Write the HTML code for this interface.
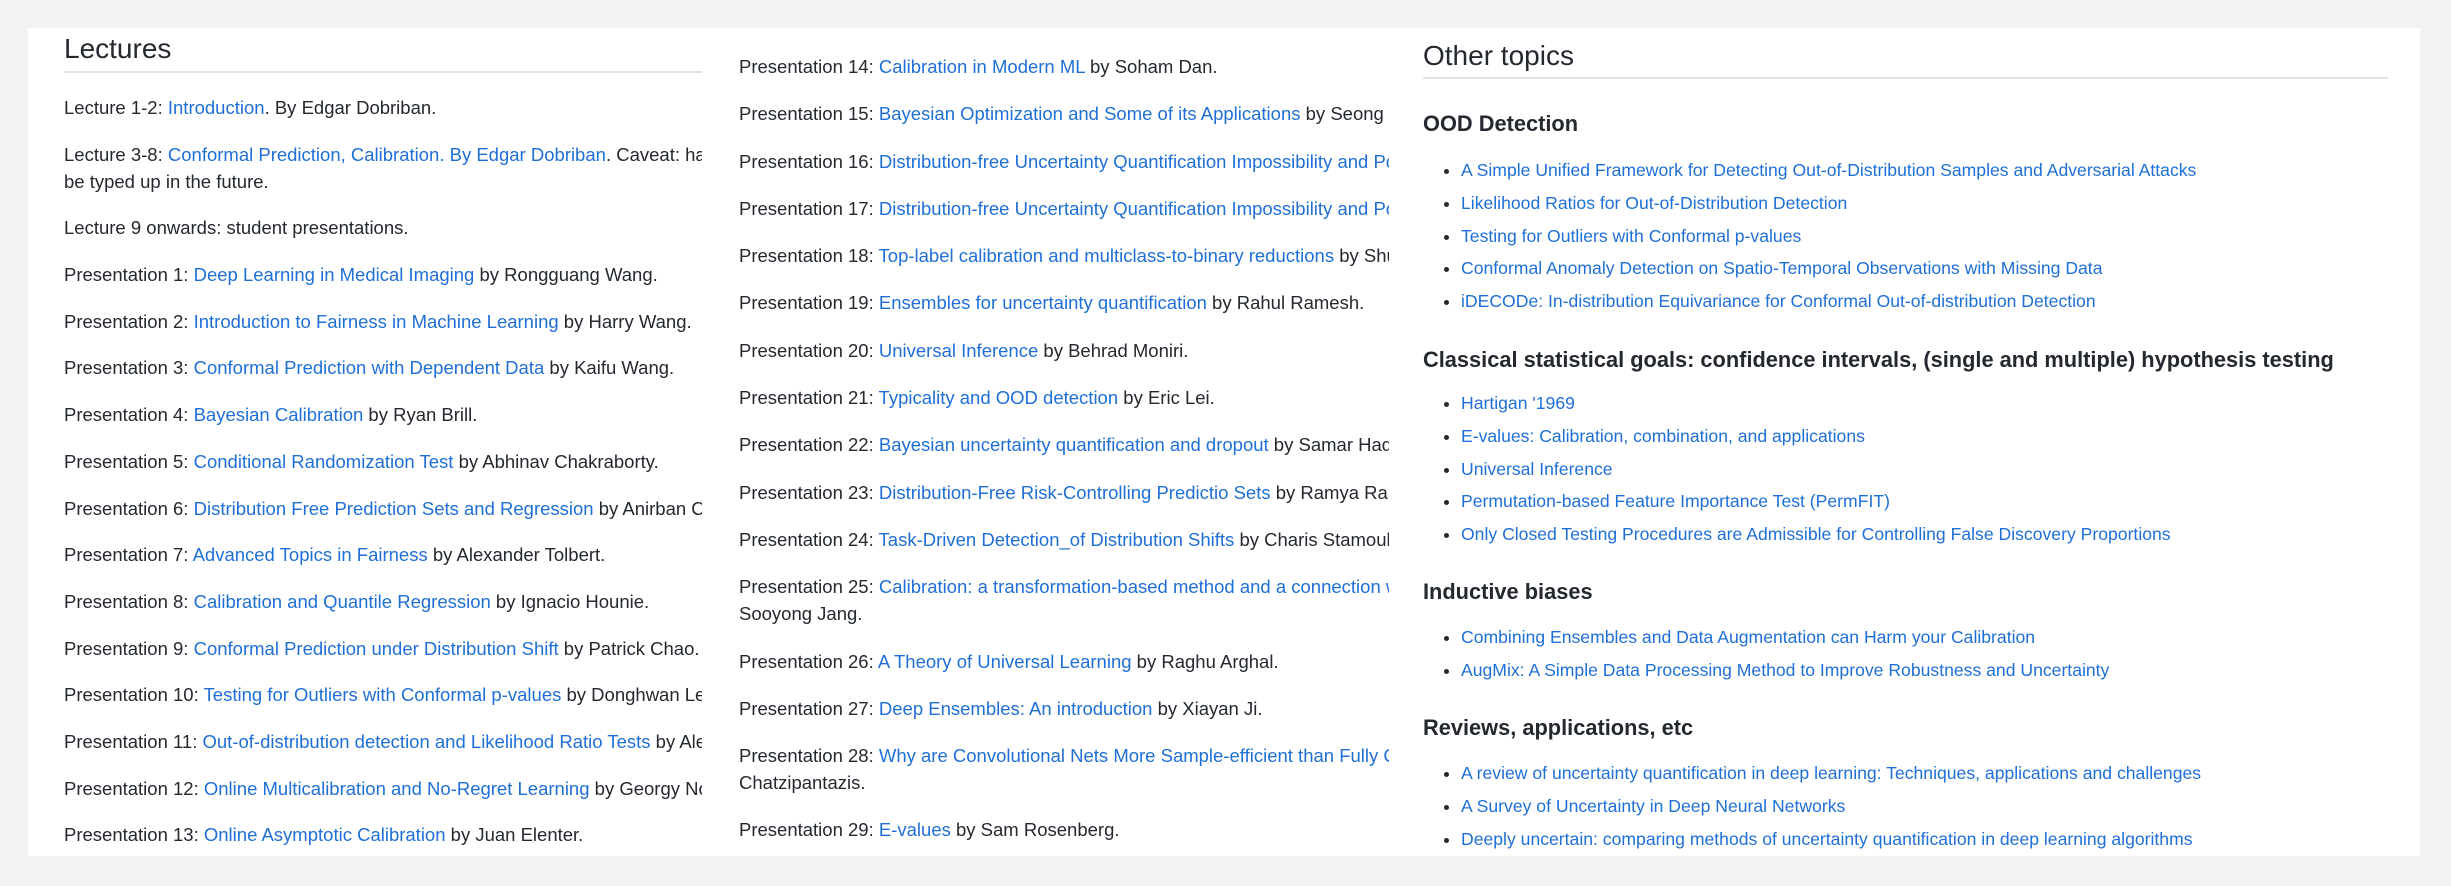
<!DOCTYPE html>
<html><head><meta charset="utf-8"><style>
*{margin:0;padding:0;box-sizing:border-box}
body{width:2451px;height:886px;background:#f2f2f2;font-family:"Liberation Sans",sans-serif;color:#24292f;overflow:hidden;position:relative}
.panel{position:absolute;left:28px;top:28px;width:2392px;height:828px;background:#fff}
.col{position:absolute;overflow:hidden;white-space:nowrap}
a{color:#1f6fd6;text-decoration:none}
.c1 p,.c2 p{font-size:18.5px;line-height:27px;margin-bottom:19.7px}
.c2 p{margin-bottom:20.3px}
h2{font-size:28px;font-weight:normal;line-height:40px}
.hr{position:absolute;height:2px;background:#dfe3e8}
h3{font-size:21.8px;font-weight:bold;line-height:34px;position:absolute;left:0}
ul{position:absolute;left:26px;list-style:disc;font-size:17.6px}
li{line-height:32.8px;margin-left:12px}
li::marker{color:#24292f}
</style></head><body>
<div class="panel"></div>

<div class="col c1" style="left:64px;top:28px;width:638px;height:828px">
<h2 style="margin-top:1px">Lectures</h2>
<div class="hr" style="left:0;top:43px;width:638px"></div>
<div style="position:absolute;top:66px;left:0">
<p>Lecture 1-2: <a>Introduction</a>. By Edgar Dobriban.</p>
<p>Lecture 3-8: <a>Conformal Prediction, Calibration. By Edgar Dobriban</a>. Caveat: handwritten notes, will<br>be typed up in the future.</p>
<p>Lecture 9 onwards: student presentations.</p>
<p>Presentation 1: <a>Deep Learning in Medical Imaging</a> by Rongguang Wang.</p>
<p>Presentation 2: <a>Introduction to Fairness in Machine Learning</a> by Harry Wang.</p>
<p>Presentation 3: <a>Conformal Prediction with Dependent Data</a> by Kaifu Wang.</p>
<p>Presentation 4: <a>Bayesian Calibration</a> by Ryan Brill.</p>
<p>Presentation 5: <a>Conditional Randomization Test</a> by Abhinav Chakraborty.</p>
<p>Presentation 6: <a>Distribution Free Prediction Sets and Regression</a> by Anirban Chatterjee.</p>
<p>Presentation 7: <a>Advanced Topics in Fairness</a> by Alexander Tolbert.</p>
<p>Presentation 8: <a>Calibration and Quantile Regression</a> by Ignacio Hounie.</p>
<p>Presentation 9: <a>Conformal Prediction under Distribution Shift</a> by Patrick Chao.</p>
<p>Presentation 10: <a>Testing for Outliers with Conformal p-values</a> by Donghwan Lee.</p>
<p>Presentation 11: <a>Out-of-distribution detection and Likelihood Ratio Tests</a> by Alexander.</p>
<p>Presentation 12: <a>Online Multicalibration and No-Regret Learning</a> by Georgy Noarov.</p>
<p>Presentation 13: <a>Online Asymptotic Calibration</a> by Juan Elenter.</p>
</div></div>

<div class="col c2" style="left:739px;top:28px;width:650px;height:828px">
<div style="position:absolute;top:25px;left:0">
<p>Presentation 14: <a>Calibration in Modern ML</a> by Soham Dan.</p>
<p>Presentation 15: <a>Bayesian Optimization and Some of its Applications</a> by Seong Han.</p>
<p>Presentation 16: <a>Distribution-free Uncertainty Quantification Impossibility and Possibility I</a></p>
<p>Presentation 17: <a>Distribution-free Uncertainty Quantification Impossibility and Possibility II</a></p>
<p>Presentation 18: <a>Top-label calibration and multiclass-to-binary reductions</a> by Shuo Li.</p>
<p>Presentation 19: <a>Ensembles for uncertainty quantification</a> by Rahul Ramesh.</p>
<p>Presentation 20: <a>Universal Inference</a> by Behrad Moniri.</p>
<p>Presentation 21: <a>Typicality and OOD detection</a> by Eric Lei.</p>
<p>Presentation 22: <a>Bayesian uncertainty quantification and dropout</a> by Samar Hadou.</p>
<p>Presentation 23: <a>Distribution-Free Risk-Controlling Predictio Sets</a> by Ramya Ramalingam.</p>
<p>Presentation 24: <a>Task-Driven Detection_of Distribution Shifts</a> by Charis Stamouli.</p>
<p>Presentation 25: <a>Calibration: a transformation-based method and a connection with adversarial</a><br>Sooyong Jang.</p>
<p>Presentation 26: <a>A Theory of Universal Learning</a> by Raghu Arghal.</p>
<p>Presentation 27: <a>Deep Ensembles: An introduction</a> by Xiayan Ji.</p>
<p>Presentation 28: <a>Why are Convolutional Nets More Sample-efficient than Fully Connected</a><br>Chatzipantazis.</p>
<p>Presentation 29: <a>E-values</a> by Sam Rosenberg.</p>
</div></div>

<div class="col c3" style="left:1423px;top:28px;width:990px;height:828px">
<h2 style="position:absolute;top:8px;left:0">Other topics</h2>
<div class="hr" style="left:0;top:49px;width:965px"></div>
<h3 style="top:79px">OOD Detection</h3>
<ul style="top:126px">
<li><a>A Simple Unified Framework for Detecting Out-of-Distribution Samples and Adversarial Attacks</a></li>
<li><a>Likelihood Ratios for Out-of-Distribution Detection</a></li>
<li><a>Testing for Outliers with Conformal p-values</a></li>
<li><a>Conformal Anomaly Detection on Spatio-Temporal Observations with Missing Data</a></li>
<li><a>iDECODe: In-distribution Equivariance for Conformal Out-of-distribution Detection</a></li>
</ul>
<h3 style="top:315px">Classical statistical goals: confidence intervals, (single and multiple) hypothesis testing</h3>
<ul style="top:359px">
<li><a>Hartigan '1969</a></li>
<li><a>E-values: Calibration, combination, and applications</a></li>
<li><a>Universal Inference</a></li>
<li><a>Permutation-based Feature Importance Test (PermFIT)</a></li>
<li><a>Only Closed Testing Procedures are Admissible for Controlling False Discovery Proportions</a></li>
</ul>
<h3 style="top:547px">Inductive biases</h3>
<ul style="top:593px">
<li><a>Combining Ensembles and Data Augmentation can Harm your Calibration</a></li>
<li><a>AugMix: A Simple Data Processing Method to Improve Robustness and Uncertainty</a></li>
</ul>
<h3 style="top:683px">Reviews, applications, etc</h3>
<ul style="top:729px">
<li><a>A review of uncertainty quantification in deep learning: Techniques, applications and challenges</a></li>
<li><a>A Survey of Uncertainty in Deep Neural Networks</a></li>
<li><a>Deeply uncertain: comparing methods of uncertainty quantification in deep learning algorithms</a></li>
</ul>
</div>
</body></html>
